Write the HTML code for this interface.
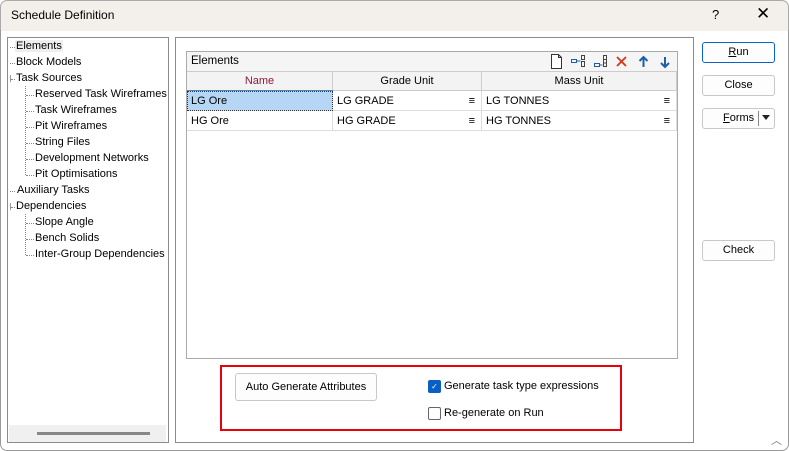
<!DOCTYPE html>
<html><head><style>
*{box-sizing:border-box;margin:0;padding:0}
body{width:789px;height:451px;background:#fff;font-family:"Liberation Sans",sans-serif;font-size:11px;color:#000;position:relative;overflow:hidden}
.a{position:absolute}
.title{left:0;top:0;width:789px;height:31px;background:#f3f0ec;border:1px solid #aaa;border-bottom:none;border-radius:7px 7px 0 0}
.win{left:0;top:30px;width:789px;height:421px;border:1px solid #999;border-top:none;border-radius:0 0 7px 7px}
.panel{border:1px solid #8a8a90;background:#fff}
.tree div{position:absolute;white-space:nowrap}
.btn{border:1px solid #c8c8c8;border-radius:3px;background:#fdfdfd;text-align:center;line-height:19px}
.cell{position:absolute;height:20px;line-height:20px;padding-left:4px;border-right:1px solid #ddd;border-bottom:1px solid #ddd}
.hd{position:absolute;top:72px;height:19px;line-height:18px;text-align:center;background:#f3f3f3;border-right:1px solid #ccc;border-bottom:1px solid #ccc}
.mn{position:absolute;right:6px;top:0;font-size:11px}
.dot{border-top:1px dotted #888}
</style></head><body>
<div class="a title"></div>
<div class="a" style="left:11px;top:8px;font-size:12px">Schedule Definition</div>
<div class="a" style="left:712px;top:7px;font-size:13px">?</div>
<div class="a" style="left:756px;top:4px;font-size:17px">✕</div>
<div class="a win"></div>

<div class="a panel" style="left:7px;top:37px;width:162px;height:406px"></div>
<div class="a" style="left:9px;top:425px;width:157px;height:17px;background:#f0f0f0"></div>
<div class="a" style="left:37px;top:432px;width:113px;height:3px;background:#888"></div>
<div class="a tree" style="left:0;top:0">
<div class="dot" style="left:10px;top:47px;width:5px"></div>
<div style="left:15px;top:40px;background:#eee;padding:0 1px">Elements</div>
<div class="dot" style="left:10px;top:63px;width:5px"></div>
<div style="left:16px;top:56px">Block Models</div>
<div style="left:10px;top:75px;border-left:1px solid #999;height:7px"></div>
<div class="dot" style="left:11px;top:79px;width:4px"></div>
<div style="left:16px;top:72px">Task Sources</div>
<div style="left:25px;top:86px;border-left:1px dotted #888;height:89px"></div>
<div class="dot" style="left:26px;top:95px;width:8px"></div><div style="left:35px;top:88px">Reserved Task Wireframes</div>
<div class="dot" style="left:26px;top:111px;width:8px"></div><div style="left:35px;top:104px">Task Wireframes</div>
<div class="dot" style="left:26px;top:127px;width:8px"></div><div style="left:35px;top:120px">Pit Wireframes</div>
<div class="dot" style="left:26px;top:143px;width:8px"></div><div style="left:35px;top:136px">String Files</div>
<div class="dot" style="left:26px;top:159px;width:8px"></div><div style="left:35px;top:152px">Development Networks</div>
<div class="dot" style="left:26px;top:175px;width:8px"></div><div style="left:35px;top:168px">Pit Optimisations</div>
<div class="dot" style="left:10px;top:191px;width:5px"></div><div style="left:17px;top:184px">Auxiliary Tasks</div>
<div style="left:10px;top:203px;border-left:1px solid #999;height:7px"></div>
<div class="dot" style="left:11px;top:207px;width:4px"></div><div style="left:16px;top:200px">Dependencies</div>
<div style="left:25px;top:214px;border-left:1px dotted #888;height:41px"></div>
<div class="dot" style="left:26px;top:223px;width:8px"></div><div style="left:35px;top:216px">Slope Angle</div>
<div class="dot" style="left:26px;top:239px;width:8px"></div><div style="left:35px;top:232px">Bench Solids</div>
<div class="dot" style="left:26px;top:255px;width:8px"></div><div style="left:35px;top:248px">Inter-Group Dependencies</div>
</div>

<div class="a panel" style="left:175px;top:37px;width:519px;height:406px"></div>
<div class="a" style="left:186px;top:51px;width:492px;height:308px;border:1px solid #aaa;background:#fff"></div>
<div class="a" style="left:187px;top:52px;width:490px;height:20px;background:#f5f5f5;border-bottom:1px solid #ccc"></div>
<div class="a" style="left:191px;top:55px;font-size:11.5px">Elements</div>
<svg class="a" style="left:540px;top:52px" width="140" height="20">
<path d="M11.5 2.5h7l3 3v11h-10z M18.5 2.5v3h3" fill="#fff" stroke="#333" stroke-width="1"/>
<rect x="31.5" y="7.5" width="5" height="3" fill="none" stroke="#1a5fa8"/><path d="M36.5 9h4" stroke="#1a5fa8"/>
<rect x="41.5" y="3.5" width="3" height="4" fill="none" stroke="#444"/><rect x="41.5" y="9.5" width="3" height="5" fill="none" stroke="#444"/>
<rect x="54.5" y="11.5" width="5" height="3" fill="none" stroke="#1a5fa8"/><path d="M59.5 13h3" stroke="#1a5fa8"/>
<rect x="63.5" y="3.5" width="3" height="11" fill="none" stroke="#444"/><path d="M63.5 7.5h3M63.5 11h3" stroke="#444"/>
<path d="M77 5l9 9M86 5l-9 9" stroke="#d0361c" stroke-width="1.8"/>
<path d="M103.5 15v-10M99.5 9l4-4 4 4" stroke="#1a5fa8" stroke-width="2" fill="none"/>
<path d="M125 5v10M121 11l4 4 4-4" stroke="#1a5fa8" stroke-width="2" fill="none"/>
</svg>
<div class="hd" style="left:187px;width:146px;color:#8b1a3a">Name</div>
<div class="a" style="left:187px;top:90px;width:146px;height:1px;background:#3b8ad6"></div>
<div class="hd" style="left:333px;width:149px">Grade Unit</div>
<div class="hd" style="left:482px;width:195px">Mass Unit</div>
<div class="cell" style="left:187px;top:91px;width:146px;background:#b6d6f5;outline:1px dotted #333;outline-offset:-1px">LG Ore</div>
<div class="cell" style="left:333px;top:91px;width:149px">LG GRADE<span class="mn">≡</span></div>
<div class="cell" style="left:482px;top:91px;width:195px">LG TONNES<span class="mn">≡</span></div>
<div class="cell" style="left:187px;top:111px;width:146px">HG Ore</div>
<div class="cell" style="left:333px;top:111px;width:149px">HG GRADE<span class="mn">≡</span></div>
<div class="cell" style="left:482px;top:111px;width:195px">HG TONNES<span class="mn">≡</span></div>

<div class="a" style="left:220px;top:365px;width:402px;height:66px;border:2px solid #e8000b"></div>
<div class="a btn" style="left:235px;top:373px;width:142px;height:28px;line-height:26px">Auto Generate Attributes</div>
<div class="a" style="left:428px;top:380px;width:13px;height:13px;background:#0a5fc4;border-radius:2px;color:#fff;font-size:8px;line-height:13px;text-align:center">✓</div>
<div class="a" style="left:444px;top:380px">Generate task type expressions</div>
<div class="a" style="left:428px;top:407px;width:13px;height:13px;border:1px solid #666;border-radius:2px"></div>
<div class="a" style="left:444px;top:407px">Re-generate on Run</div>

<div class="a btn" style="left:702px;top:42px;width:73px;height:21px;border-color:#0a64c8"><u>R</u>un</div>
<div class="a btn" style="left:702px;top:75px;width:73px;height:21px">Close</div>
<div class="a btn" style="left:702px;top:108px;width:73px;height:21px;text-align:left;padding-left:20px"><u>F</u>orms</div>
<div class="a" style="left:758px;top:111px;width:1px;height:15px;background:#888"></div>
<div class="a" style="left:762px;top:115px;border-left:4px solid transparent;border-right:4px solid transparent;border-top:5px solid #222"></div>
<div class="a btn" style="left:702px;top:240px;width:73px;height:21px">Check</div>
<div class="a" style="left:771px;top:432px;font-size:11px;color:#777">︿</div>
</body></html>
